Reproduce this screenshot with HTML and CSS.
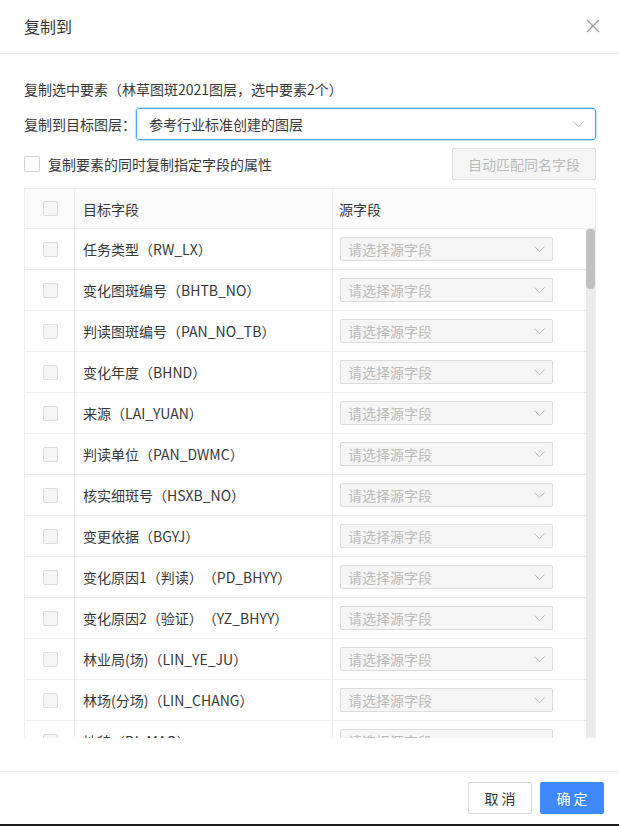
FILE: index.html
```html
<!DOCTYPE html>
<html lang="zh-CN">
<head>
<meta charset="utf-8">
<title>复制到</title>
<link rel="stylesheet" href="styles.css">
</head>
<body>
<div class="dialog">
  <div class="dlg-header">
    <span class="dlg-title">复制到</span>
    <svg class="close" width="14" height="14" viewBox="0 0 14 14"><path d="M1 1 L13 13 M13 1 L1 13" stroke="#999" stroke-width="1.2" fill="none"/></svg>
  </div>
  <div class="dlg-body">
    <div class="info">复制选中要素（林草图斑2021图层，选中要素2个）</div>
    <div class="target-row">
      <span class="label">复制到目标图层：</span>
      <div class="select focused">
        <span class="select-text">参考行业标准创建的图层</span>
        <svg class="chev" width="11" height="7" viewBox="0 0 11 7"><path d="M0.5 0.5 L5.5 5.8 L10.5 0.5" stroke="#bbb" stroke-width="1" fill="none"/></svg>
      </div>
    </div>
    <div class="opt-row">
      <label class="check-label"><span class="checkbox"></span>复制要素的同时复制指定字段的属性</label>
      <button class="btn disabled">自动匹配同名字段</button>
    </div>
    <div class="table">
      <div class="thead">
        <div class="cell cell-check"><span class="cb-dis"></span></div>
        <div class="cell cell-target">目标字段</div>
        <div class="cell cell-source">源字段</div>
      </div>
      <div class="tbody-wrap">
        <div class="tbody">
          <div class="row"><div class="cell cell-check"><span class="cb-dis"></span></div><div class="cell cell-target">任务类型（RW_LX）</div><div class="cell cell-source"><div class="mini-select"><span>请选择源字段</span><svg width="11" height="7" viewBox="0 0 11 7"><path d="M0.5 0.5 L5.5 5.8 L10.5 0.5" stroke="#bbb" stroke-width="1" fill="none"/></svg></div></div></div>
          <div class="row"><div class="cell cell-check"><span class="cb-dis"></span></div><div class="cell cell-target">变化图斑编号（BHTB_NO）</div><div class="cell cell-source"><div class="mini-select"><span>请选择源字段</span><svg width="11" height="7" viewBox="0 0 11 7"><path d="M0.5 0.5 L5.5 5.8 L10.5 0.5" stroke="#bbb" stroke-width="1" fill="none"/></svg></div></div></div>
          <div class="row"><div class="cell cell-check"><span class="cb-dis"></span></div><div class="cell cell-target">判读图斑编号（PAN_NO_TB）</div><div class="cell cell-source"><div class="mini-select"><span>请选择源字段</span><svg width="11" height="7" viewBox="0 0 11 7"><path d="M0.5 0.5 L5.5 5.8 L10.5 0.5" stroke="#bbb" stroke-width="1" fill="none"/></svg></div></div></div>
          <div class="row"><div class="cell cell-check"><span class="cb-dis"></span></div><div class="cell cell-target">变化年度（BHND）</div><div class="cell cell-source"><div class="mini-select"><span>请选择源字段</span><svg width="11" height="7" viewBox="0 0 11 7"><path d="M0.5 0.5 L5.5 5.8 L10.5 0.5" stroke="#bbb" stroke-width="1" fill="none"/></svg></div></div></div>
          <div class="row"><div class="cell cell-check"><span class="cb-dis"></span></div><div class="cell cell-target">来源（LAI_YUAN）</div><div class="cell cell-source"><div class="mini-select"><span>请选择源字段</span><svg width="11" height="7" viewBox="0 0 11 7"><path d="M0.5 0.5 L5.5 5.8 L10.5 0.5" stroke="#bbb" stroke-width="1" fill="none"/></svg></div></div></div>
          <div class="row"><div class="cell cell-check"><span class="cb-dis"></span></div><div class="cell cell-target">判读单位（PAN_DWMC）</div><div class="cell cell-source"><div class="mini-select"><span>请选择源字段</span><svg width="11" height="7" viewBox="0 0 11 7"><path d="M0.5 0.5 L5.5 5.8 L10.5 0.5" stroke="#bbb" stroke-width="1" fill="none"/></svg></div></div></div>
          <div class="row"><div class="cell cell-check"><span class="cb-dis"></span></div><div class="cell cell-target">核实细斑号（HSXB_NO）</div><div class="cell cell-source"><div class="mini-select"><span>请选择源字段</span><svg width="11" height="7" viewBox="0 0 11 7"><path d="M0.5 0.5 L5.5 5.8 L10.5 0.5" stroke="#bbb" stroke-width="1" fill="none"/></svg></div></div></div>
          <div class="row"><div class="cell cell-check"><span class="cb-dis"></span></div><div class="cell cell-target">变更依据（BGYJ）</div><div class="cell cell-source"><div class="mini-select"><span>请选择源字段</span><svg width="11" height="7" viewBox="0 0 11 7"><path d="M0.5 0.5 L5.5 5.8 L10.5 0.5" stroke="#bbb" stroke-width="1" fill="none"/></svg></div></div></div>
          <div class="row"><div class="cell cell-check"><span class="cb-dis"></span></div><div class="cell cell-target">变化原因1（判读）（PD_BHYY）</div><div class="cell cell-source"><div class="mini-select"><span>请选择源字段</span><svg width="11" height="7" viewBox="0 0 11 7"><path d="M0.5 0.5 L5.5 5.8 L10.5 0.5" stroke="#bbb" stroke-width="1" fill="none"/></svg></div></div></div>
          <div class="row"><div class="cell cell-check"><span class="cb-dis"></span></div><div class="cell cell-target">变化原因2（验证）（YZ_BHYY）</div><div class="cell cell-source"><div class="mini-select"><span>请选择源字段</span><svg width="11" height="7" viewBox="0 0 11 7"><path d="M0.5 0.5 L5.5 5.8 L10.5 0.5" stroke="#bbb" stroke-width="1" fill="none"/></svg></div></div></div>
          <div class="row"><div class="cell cell-check"><span class="cb-dis"></span></div><div class="cell cell-target">林业局(场)（LIN_YE_JU）</div><div class="cell cell-source"><div class="mini-select"><span>请选择源字段</span><svg width="11" height="7" viewBox="0 0 11 7"><path d="M0.5 0.5 L5.5 5.8 L10.5 0.5" stroke="#bbb" stroke-width="1" fill="none"/></svg></div></div></div>
          <div class="row"><div class="cell cell-check"><span class="cb-dis"></span></div><div class="cell cell-target">林场(分场)（LIN_CHANG）</div><div class="cell cell-source"><div class="mini-select"><span>请选择源字段</span><svg width="11" height="7" viewBox="0 0 11 7"><path d="M0.5 0.5 L5.5 5.8 L10.5 0.5" stroke="#bbb" stroke-width="1" fill="none"/></svg></div></div></div>
          <div class="row"><div class="cell cell-check"><span class="cb-dis"></span></div><div class="cell cell-target">地貌（DI_MAO）</div><div class="cell cell-source"><div class="mini-select"><span>请选择源字段</span><svg width="11" height="7" viewBox="0 0 11 7"><path d="M0.5 0.5 L5.5 5.8 L10.5 0.5" stroke="#bbb" stroke-width="1" fill="none"/></svg></div></div></div>
        </div>
        <div class="scrollbar"><div class="thumb"></div></div>
      </div>
    </div>
  </div>
  <div class="dlg-footer">
    <button class="btn">取 消</button>
    <button class="btn primary">确 定</button>
  </div>
</div>
<div class="taskbar"></div>
</body>
</html>
```
FILE: styles.css
```css
* { box-sizing: border-box; }
html, body { margin: 0; padding: 0; background: #fff; }
body {
  font-family: "Noto Sans CJK SC", "Noto Sans", sans-serif;
  font-size: 14px;
  color: #383838;
  width: 619px;
  height: 826px;
  overflow: hidden;
  text-spacing-trim: space-all;
}
.dialog {
  height: 824px;
  display: flex;
  flex-direction: column;
  background: #fff;
}
.dlg-header {
  height: 54px;
  border-bottom: 1px solid #ececec;
  display: flex;
  align-items: center;
  justify-content: space-between;
  padding: 0 19px 0 24px;
  flex: none;
}
.dlg-title { font-size: 16px; line-height: 22px; color: #333; margin-top: -2px; }
.close { display: block; margin-top: -2px; }
.dlg-body {
  flex: 1;
  padding: 25px 23px 0 24px;
  display: flex;
  flex-direction: column;
}
.info { line-height: 20px; height: 20px; }
.target-row {
  margin-top: 9px;
  display: flex;
  align-items: center;
  height: 32px;
}
.label { width: 112px; line-height: 20px; flex: none; }
.select {
  flex: 1;
  height: 32px;
  border: 1px solid #4aa3ff;
  border-radius: 3px;
  box-shadow: 0 0 0 1px rgba(74,163,255,0.18), 0 0 3px rgba(74,163,255,0.35);
  display: flex;
  align-items: center;
  justify-content: space-between;
  padding: 0 11px 0 12px;
}
.select-text { line-height: 20px; }
.chev { display: block; }
.opt-row {
  margin-top: 8px;
  height: 32px;
  display: flex;
  align-items: center;
  justify-content: space-between;
}
.check-label { display: flex; align-items: center; line-height: 20px; }
.checkbox {
  width: 16px; height: 16px;
  border: 1px solid #d0d0d0;
  border-radius: 2px;
  background: #fff;
  margin-right: 8px;
}
.btn {
  font-family: inherit;
  font-size: 14px;
  height: 32px;
  border: 1px solid #d9d9d9;
  border-radius: 2px;
  background: #fff;
  color: #333;
  padding: 0 15px;
  line-height: 20px;
  cursor: pointer;
}
.btn.disabled {
  background: #f5f5f5;
  color: #bbb;
  border-color: #dcdcdc;
  width: 144px;
  padding: 0;
}
.table {
  margin-top: 8px;
  border: 1px solid #eee;
  border-bottom: none;
  display: flex;
  flex-direction: column;
  height: 550px;
}
.thead, .row {
  display: grid;
  grid-template-columns: 50px 258px 1fr;
  border-bottom: 1px solid #eee;
}
.thead { height: 40px; background: #fafafa; border-bottom-color: #ececec; }
.row { height: 41px; }
.cell {
  display: flex;
  align-items: center;
  border-right: 1px solid #eee;
  line-height: 20px;
}
.cell-source { border-right: none; }
.cell-check { justify-content: center; padding-left: 1px; }
.cell-target { padding-left: 8px; }
.thead .cell-source { padding-left: 6px; }
.row .cell-source { padding-left: 7px; }
.cb-dis {
  width: 15px; height: 15px;
  border: 1px solid #dcdcdc;
  border-radius: 2px;
  background: #f5f5f5;
}
.tbody-wrap {
  flex: 1;
  display: flex;
  overflow: hidden;
}
.tbody { flex: 1; overflow: hidden; }
.scrollbar {
  width: 9px;
  flex: none;
  background: #ececec;
}
.thumb {
  height: 60px;
  background: #c1c1c1;
  border-radius: 4px;
}
.mini-select {
  width: 213px;
  height: 24px;
  border: 1px solid #dcdcdc;
  border-radius: 2px;
  background: #f5f5f5;
  color: #bbb;
  display: flex;
  align-items: center;
  justify-content: space-between;
  padding: 0 7px 0 7px;
  line-height: 20px;
}
.mini-select svg { display: block; }
.dlg-footer {
  flex: none;
  height: 53px;
  border-top: 1px solid #ececec;
  display: flex;
  justify-content: flex-end;
  align-items: center;
  gap: 8px;
  padding: 0 15px 0 0;
}
.dlg-footer .btn { width: 64px; padding: 0; }
.btn.primary {
  background: #3f88fe;
  border-color: #3f88fe;
  color: #fff;
}
.taskbar { height: 2px; background: #1b1b1b; }
```
